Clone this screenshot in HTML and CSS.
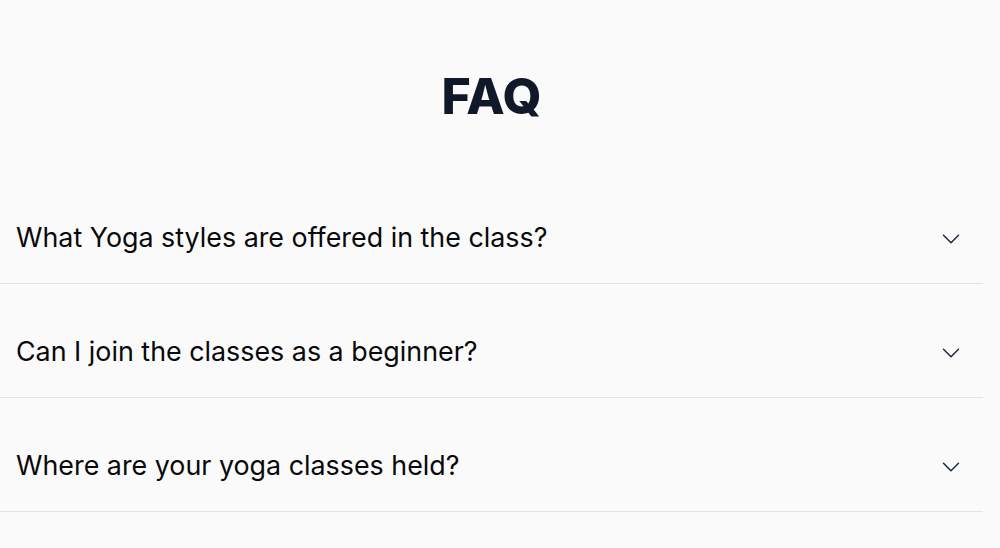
FILE: index.html
```html
<!DOCTYPE html>
<html lang="en">
<head>
<meta charset="utf-8">
<title>FAQ</title>
<link rel="stylesheet" href="styles.css">
</head>
<body>
<section class="faq">
  <h1 class="faq-title">FAQ</h1>
  <div class="faq-list">
    <div class="faq-item">
      <button class="faq-trigger">
        <span class="faq-question">What Yoga styles are offered in the class?</span>
        <svg class="chevron" viewBox="0 0 24 24" fill="none" stroke="currentColor" stroke-width="1.5"><path stroke-linecap="round" stroke-linejoin="round" d="m19.5 8.25-7.5 7.5-7.5-7.5"/></svg>
      </button>
    </div>
    <div class="faq-item">
      <button class="faq-trigger">
        <span class="faq-question">Can I join the classes as a beginner?</span>
        <svg class="chevron" viewBox="0 0 24 24" fill="none" stroke="currentColor" stroke-width="1.5"><path stroke-linecap="round" stroke-linejoin="round" d="m19.5 8.25-7.5 7.5-7.5-7.5"/></svg>
      </button>
    </div>
    <div class="faq-item">
      <button class="faq-trigger">
        <span class="faq-question">Where are your yoga classes held?</span>
        <svg class="chevron" viewBox="0 0 24 24" fill="none" stroke="currentColor" stroke-width="1.5"><path stroke-linecap="round" stroke-linejoin="round" d="m19.5 8.25-7.5 7.5-7.5-7.5"/></svg>
      </button>
    </div>
  </div>
</section>
</body>
</html>
```
FILE: styles.css
```css
html, body {
  margin: 0;
  padding: 0;
  background: #fafafa;
  font-family: Inter, "Noto Sans", sans-serif;
}

.faq {
  width: 983px;
  padding-top: 71px;
}

.faq-title {
  margin: 0;
  text-align: center;
  font-size: 50px;
  line-height: 51px;
  font-weight: 800;
  color: #111827;
}

.faq-list {
  margin-top: 48px;
  display: flex;
  flex-direction: column;
}

.faq-item {
  border-bottom: 1px solid #e4e4e7;
}

.faq-trigger {
  width: 100%;
  display: flex;
  align-items: center;
  justify-content: space-between;
  padding: 51px 20px 30px 16px;
  margin: 0;
  border: 0;
  background: transparent;
  font-family: inherit;
  text-align: left;
  cursor: pointer;
}

.faq-question {
  font-size: 26.85px;
  line-height: 32px;
  font-weight: 400;
  color: #09090b;
}

.chevron {
  width: 24px;
  height: 24px;
  margin-top: 3px;
  color: #1e293b;
  flex-shrink: 0;
}
```
